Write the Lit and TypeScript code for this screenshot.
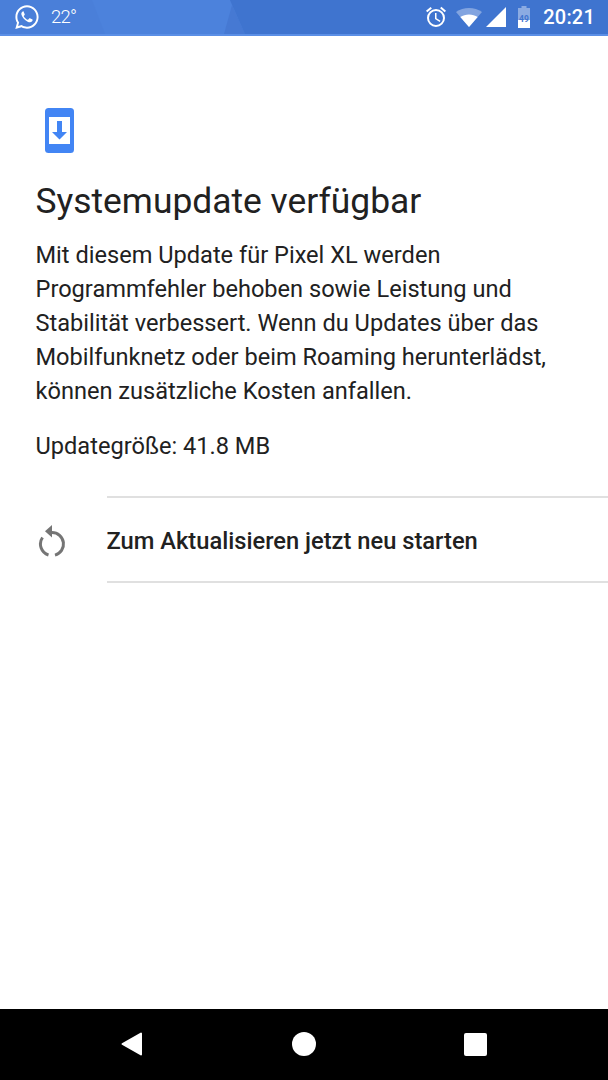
import { LitElement, html, css } from "lit";
import { customElement } from "lit/decorators.js";

@customElement("app-root")
export class AppRoot extends LitElement {
  static styles = css`
    :host { display: flex; flex-direction: column; width: 608px; height: 1080px; background: #fff; font-family: Roboto, "Liberation Sans", sans-serif; color: #212121; overflow: hidden; }
    .status { position: relative; flex: 0 0 36px; box-sizing: border-box; height: 36px; background: #4a7fd9; border-bottom: 2px solid #5b8fe6; display: flex; align-items: center; color: #fff; padding: 0 13px 0 14px; overflow: hidden; }
    .bg { position: absolute; left: 0; top: 0; width: 608px; height: 34px; }
    .status > *:not(.bg) { position: relative; }
    .temp { font-size: 18.5px; font-weight: 300; letter-spacing: -0.8px; margin-left: 11px; }
    .spacer { flex: 1; }
    .right { display: flex; align-items: center; }
    .wifi { margin-left: 8px; }
    .signal { margin-left: 4px; }
    .battery { margin-left: 12px; }
    .time { font-size: 20px; font-weight: 500; margin-left: 13px; letter-spacing: .2px; }
    .main { flex: 1; display: flex; flex-direction: column; }
    .head { padding: 72px 36px 0 35.5px; display: flex; flex-direction: column; }
    .icon { display: block; width: 29px; height: 45px; margin-left: 9.5px; }
    h1 { margin: 26px 0 0; font-size: 35.4px; line-height: 44px; font-weight: 400; color: #212121; }
    p { margin: 0; font-size: 23.6px; line-height: 34px; color: #212121; }
    .desc { margin-top: 15px; }
    .size { margin-top: 21px; }
    .row { margin-top: 33px; display: flex; height: 87px; }
    .row-icon { flex: 0 0 106.500px; display: flex; align-items: center; padding-left: 38px; padding-top: 3px; box-sizing: border-box; }
    .row-label { flex: 1; display: flex; align-items: center; border-top: 2px solid #e0e0e0; border-bottom: 2px solid #e0e0e0; font-size: 23.7px; font-weight: 500; padding-top: 2px; }
    .nav { flex: 0 0 71px; background: #000; display: flex; align-items: center; justify-content: space-between; padding: 0 121px 1px; box-sizing: border-box; }
  `;

  render() {
    return html`
      <div class="status">
        <svg class="bg" viewBox="0 0 608 34">
          <polygon points="92,0 230,0 245,34 105,34" fill="#4c82dc" />
          <polygon points="232,5 245,34 224,34" fill="#4679d3" />
          <polygon points="230,0 608,0 608,34 245,34" fill="#3f74cf" />
        </svg>
        <svg width="26" height="26" viewBox="0 0 24 24" fill="#fff"><path fill-rule="evenodd" d="M12 1.200C6.100 1.200 1.300 6 1.300 11.900c0 2 .5 3.800 1.500 5.500L1.200 23l5.800-1.500c1.600.9 3.300 1.300 5 1.300 5.900 0 10.700-4.900 10.700-10.800S17.900 1.200 12 1.200zm0 19.700c-1.600 0-3.100-.4-4.500-1.300l-.4-.2-3.300.9.900-3.200-.2-.4c-1-1.400-1.400-3-1.400-4.700 0-4.900 4-8.900 8.900-8.900s8.900 4 8.900 8.900-4 8.900-8.900 8.900z"/><path d="M8.800 6.800c-.3-.1-.9 0-1.300.5-.6.700-.9 1.500-.6 2.700.5 2 2.800 5 5.700 6.300 1.600.7 3 .7 3.900-.1.500-.4.800-1 .7-1.600 0-.2-.3-.4-.5-.5l-2-.9c-.3-.1-.5-.1-.7.200l-.8 1c-.2.200-.4.200-.7.100-1.500-.6-2.700-1.800-3.400-3-.1-.3-.1-.5.100-.7l.6-.7c.1-.2.200-.4.100-.7l-.8-1.900c-.1-.3-.2-.4-.3-.5z"/></svg>
        <span class="temp">22°</span>
        <span class="spacer"></span>
        <div class="right">
          <svg width="24" height="24" viewBox="0 0 24 24" fill="#fff"><path d="M22 5.700l-4.600-3.900-1.300 1.500 4.600 3.900zM7.900 3.400L6.600 1.900 2 5.700l1.300 1.500zM12.500 8H11v6l4.700 2.900.8-1.200-4-2.400zM12 4a9 9 0 1 0 0 18 9 9 0 0 0 0-18zm0 16a7 7 0 1 1 0-14 7 7 0 0 1 0 14z"/></svg>
          <svg class="wifi" width="26" height="19" viewBox="0 0 26 19"><path d="M13 19L0 4C3.800 1.300 8.200 0 13 0s9.200 1.300 13 4z" fill="#fff" opacity=".35"/><path d="M13 19L4.300 9C6.800 7.300 9.800 6.400 13 6.400s6.200.9 8.700 2.600z" fill="#fff"/></svg>
          <svg class="signal" width="20" height="20" viewBox="0 0 20 20"><path d="M0 20L20 0v20z" fill="#fff"/></svg>
          <svg class="battery" width="12" height="22" viewBox="0 0 12 22"><path d="M3.500 0h5v2H12v20H0V2h3.500z" fill="#fff" opacity=".4"/><path d="M0 14h12v8H0z" fill="#fff"/><text x="6" y="15.500" font-size="8.500" font-weight="700" text-anchor="middle" fill="#3f74cf" font-family="Roboto">49</text></svg>
          <span class="time">20:21</span>
        </div>
      </div>
      <div class="main">
        <div class="head">
          <svg class="icon" viewBox="0 0 29 45"><rect x="0" y="0" width="29" height="45" rx="3.500" fill="#4285f4"/><rect x="4" y="9" width="21" height="27" fill="#fff"/><path d="M12 13h5v11h5l-7.500 7.500L7 24h5z" fill="#4285f4"/></svg>
          <h1>Systemupdate verfügbar</h1>
          <p class="desc">Mit diesem Update für Pixel XL werden<br />Programmfehler behoben sowie Leistung und<br />Stabilität verbessert. Wenn du Updates über das<br />Mobilfunknetz oder beim Roaming herunterlädst,<br />können zusätzliche Kosten anfallen.</p>
          <p class="size">Updategröße: 41.8 MB</p>
        </div>
        <div class="row">
          <div class="row-icon"><svg width="28" height="33" viewBox="0 0 28 33"><path d="M14 7.500a11.500 11.500 0 0 1 3 22.600" fill="none" stroke="#757575" stroke-width="3"/><path d="M4.500 12.500A11.500 11.500 0 0 0 10.500 30" fill="none" stroke="#757575" stroke-width="3"/><path d="M14 0v12.500L7 6.200z" fill="#757575"/></svg></div>
          <div class="row-label">Zum Aktualisieren jetzt neu starten</div>
        </div>
      </div>
      <div class="nav">
        <svg width="22" height="24" viewBox="0 0 22 24"><path d="M20 1.500v21L1.500 12z" fill="#fff" stroke="#fff" stroke-width="2" stroke-linejoin="round"/></svg>
        <svg width="24" height="24" viewBox="0 0 24 24"><circle cx="12" cy="12" r="12" fill="#fff"/></svg>
        <svg width="23" height="23" viewBox="0 0 23 23"><rect width="23" height="23" rx="2" fill="#fff"/></svg>
      </div>
    `;
  }
}
